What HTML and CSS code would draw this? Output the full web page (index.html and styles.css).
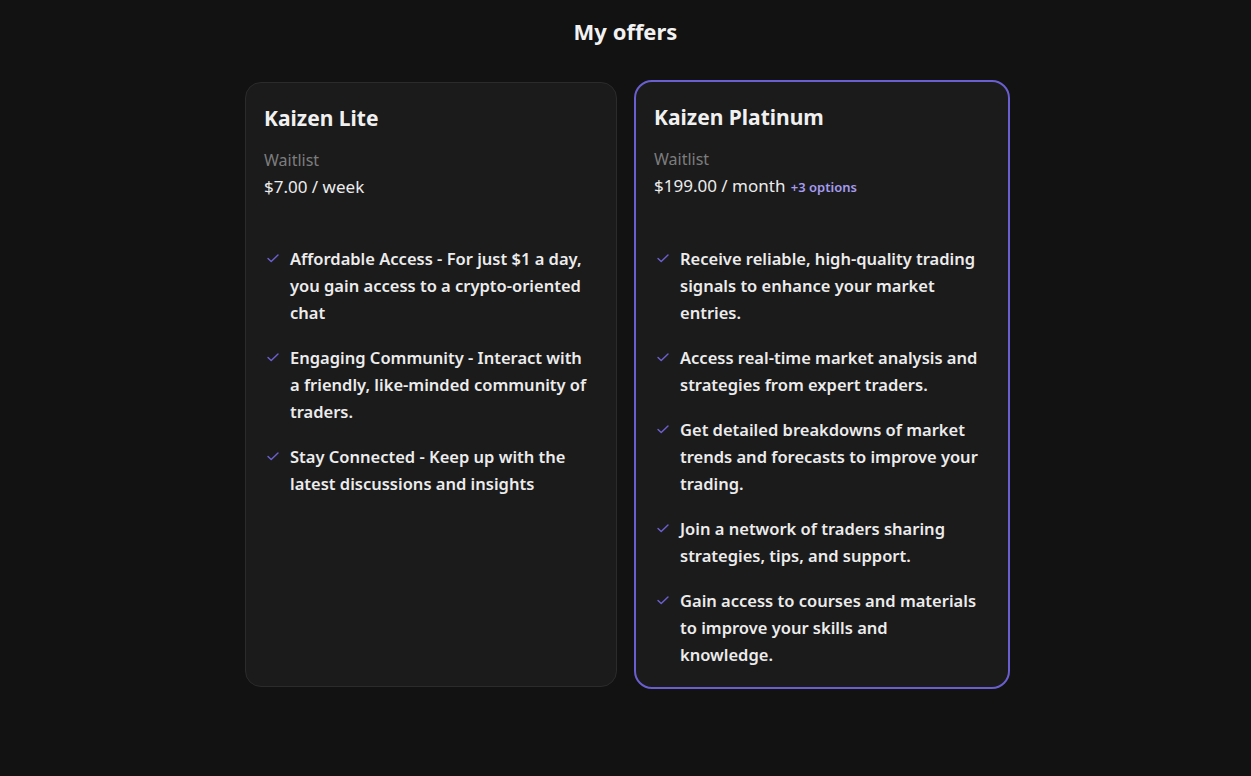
FILE: index.html
```html
<!DOCTYPE html>
<html lang="en">
<head>
<meta charset="utf-8">
<title>My offers</title>
<link rel="stylesheet" href="styles.css">
</head>
<body>
<main class="page">
  <h1 class="page-title">My offers</h1>
  <div class="offers">
    <section class="card">
      <h2 class="card-title">Kaizen Lite</h2>
      <div class="status">Waitlist</div>
      <div class="price">$7.00 / week</div>
      <ul class="features">
        <li><svg class="check" viewBox="0 0 12 9"><path d="M1 4.6 4.2 7.6 11 1"/></svg><span>Affordable Access - For just $1 a day, you gain access to a crypto-oriented chat</span></li>
        <li><svg class="check" viewBox="0 0 12 9"><path d="M1 4.6 4.2 7.6 11 1"/></svg><span>Engaging Community - Interact with a friendly, like-minded community of traders.</span></li>
        <li><svg class="check" viewBox="0 0 12 9"><path d="M1 4.6 4.2 7.6 11 1"/></svg><span>Stay Connected - Keep up with the latest discussions and insights</span></li>
      </ul>
    </section>
    <section class="card card-selected">
      <h2 class="card-title">Kaizen Platinum</h2>
      <div class="status">Waitlist</div>
      <div class="price">$199.00 / month <span class="options">+3 options</span></div>
      <ul class="features">
        <li><svg class="check" viewBox="0 0 12 9"><path d="M1 4.6 4.2 7.6 11 1"/></svg><span>Receive reliable, high-quality trading signals to enhance your market entries.</span></li>
        <li><svg class="check" viewBox="0 0 12 9"><path d="M1 4.6 4.2 7.6 11 1"/></svg><span>Access real-time market analysis and strategies from expert traders.</span></li>
        <li><svg class="check" viewBox="0 0 12 9"><path d="M1 4.6 4.2 7.6 11 1"/></svg><span>Get detailed breakdowns of market trends and forecasts to improve your trading.</span></li>
        <li><svg class="check" viewBox="0 0 12 9"><path d="M1 4.6 4.2 7.6 11 1"/></svg><span>Join a network of traders sharing strategies, tips, and support.</span></li>
        <li><svg class="check" viewBox="0 0 12 9"><path d="M1 4.6 4.2 7.6 11 1"/></svg><span>Gain access to courses and materials to improve your skills and knowledge.</span></li>
      </ul>
    </section>
  </div>
</main>
</body>
</html>
```

FILE: styles.css
```css
* { box-sizing: border-box; }
html, body {
  margin: 0;
  padding: 0;
  background: #121212;
  color: #e9e9e9;
  font-family: "Noto Sans", "Open Sans", sans-serif;
}
.page {
  display: flex;
  flex-direction: column;
  align-items: center;
  padding-top: 15px;
}
.page-title {
  margin: 0;
  font-size: 22px;
  font-weight: 700;
  line-height: 32px;
  color: #f2f2f2;
}
.offers {
  display: flex;
  align-items: stretch;
  gap: 15px;
  margin-top: 33px;
  padding-left: 2px;
}
.card {
  width: 372px;
  margin: 2px;
  background: #1b1b1c;
  border: 1px solid #2b2b2c;
  border-radius: 16px;
  padding: 20px 18px 19px 18px;
}
.card-selected {
  width: 376px;
  margin: 0;
  border: 2px solid #6a5fcf;
  border-radius: 18px;
}
.card-title {
  margin: 0;
  font-size: 21px;
  font-weight: 700;
  line-height: 30px;
  color: #f0f0f0;
}
.status {
  margin-top: 14px;
  font-size: 16px;
  line-height: 26px;
  color: #7d7d7d;
}
.price {
  font-size: 17px;
  line-height: 28px;
  color: #ececec;
}
.options {
  font-size: 13px;
  font-weight: 600;
  color: #a69cf0;
  margin-left: 1px;
}
.features {
  list-style: none;
  margin: 44px 0 0 0;
  padding: 0;
  display: flex;
  flex-direction: column;
  gap: 18px;
}
.features li {
  display: flex;
  align-items: flex-start;
  font-size: 16.5px;
  font-weight: 600;
  line-height: 27px;
  color: #ececec;
}
.features li span {
  max-width: 300px;
}
.check {
  flex: none;
  width: 12px;
  height: 9px;
  margin: 9px 11px 0 3px;
  fill: none;
  stroke: #6c60d0;
  stroke-width: 1.4;
  stroke-linecap: round;
  stroke-linejoin: round;
}
```
